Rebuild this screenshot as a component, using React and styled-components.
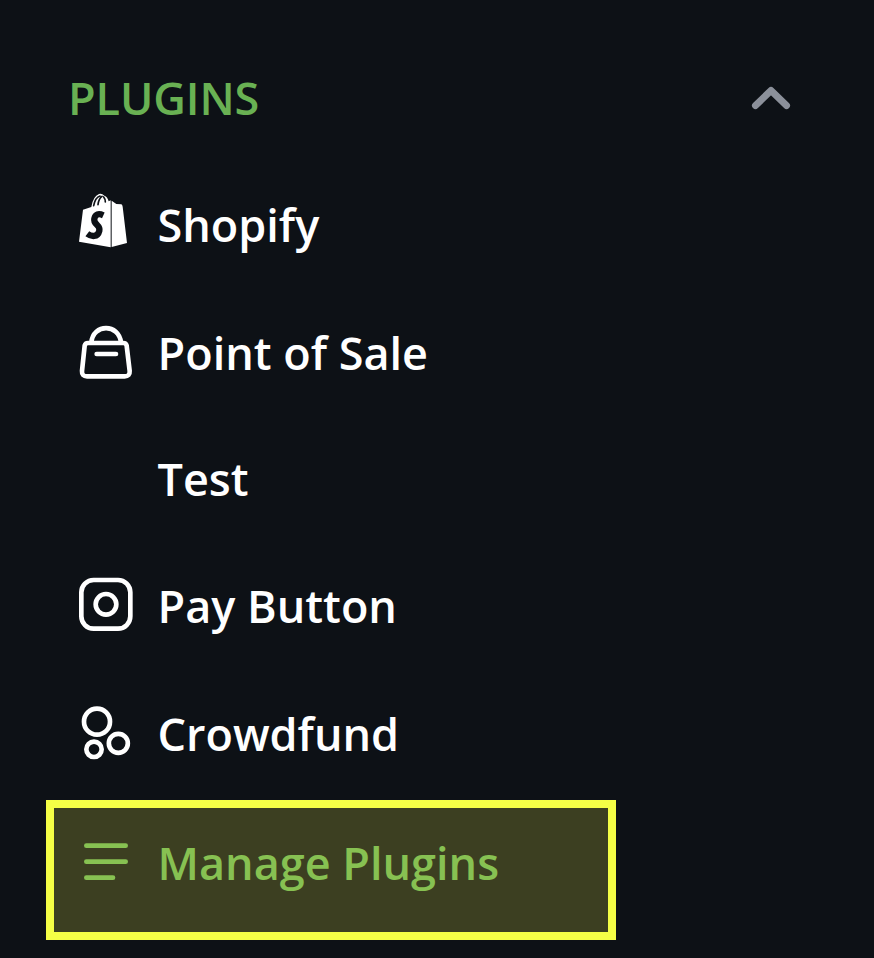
import React from "react";
import styled, { createGlobalStyle } from "styled-components";

const Global = createGlobalStyle`
  * { box-sizing: border-box; }
  body { margin: 0; background: #0d1116; overflow: hidden; }
`;

const Sidebar = styled.nav`
  width: 874px;
  height: 958px;
  padding-top: 36px;
  background: #0d1116;
  color: #fff;
  font: 600 45px/60px "Open Sans", sans-serif;
`;

const Header = styled.header`
  display: flex;
  align-items: center;
  justify-content: space-between;
  height: 124px;
  padding: 0 83px 0 68px;
`;

const Title = styled.h2`
  margin: 0;
  color: #69b153;
  font: inherit;
  letter-spacing: -0.1px;
`;

const Chevron = styled.svg`
  width: 40px;
  height: 24px;
`;

const Menu = styled.ul`
  display: flex;
  flex-direction: column;
  margin: 0;
  padding: 0;
  list-style: none;
`;

const Item = styled.li`
  display: flex;
  align-items: center;
  height: ${(p) => p.$height || 128}px;
  padding-left: 65px;
`;

const ActiveItem = styled(Item)`
  width: 570px;
  height: 140px;
  margin: 2px 0 0 46px;
  padding: 0 0 16px 11px;
  border: 8px solid #f5ff46;
  background: #3c3f21;
  color: #87c152;
`;

const Icon = styled.svg`
  flex: none;
  width: 80px;
  height: 80px;
  fill: none;
  stroke: currentColor;
  stroke-width: 14;
  stroke-linecap: round;
  stroke-linejoin: round;
`;

const IconSlot = styled.span`
  flex: none;
  width: 80px;
`;

const Label = styled.span`
  margin-left: 12.5px;
  padding-top: ${(p) => p.$drop || 0}px;
  white-space: nowrap;
`;

const ShopifyIcon = () => (
  <Icon viewBox="0 12 240 240">
    <path d="M54 89L79 81Q84 49 102 42Q111 40 118 47Q128 51 131 64L137 61V202L42 185Z" fill="currentColor" stroke="none" />
    <path d="M140 62L154 72L169 73Q172 74 173 80L186 189L140 201Z" fill="currentColor" stroke="none" />
    <path d="M86 77Q91 52 105 48M99 74Q101 56 111 49M116 51Q121 57 121 66" stroke="#0d1116" strokeWidth="5" />
    <path d="M115 106Q93 96 88 116C84 134 107 135 103 152C98 173 79 170 67 161" stroke="#0d1116" strokeWidth="19" strokeLinecap="butt" />
  </Icon>
);

const BagIcon = () => (
  <Icon viewBox="0 -9 240 240">
    <path d="M69 84H175Q183 84 185 92L194 168Q195 184 179 184H66Q50 184 51 168L59 92Q61 84 69 84Z" />
    <path d="M79 83C84 25 162 25 168 83M95 117H153" />
  </Icon>
);

const PayIcon = () => (
  <Icon viewBox="0 3 240 240">
    <rect x="49" y="45" width="147" height="146" rx="37" />
    <circle cx="123" cy="118" r="31" />
  </Icon>
);

const CrowdIcon = () => (
  <Icon viewBox="0 -3 240 240">
    <circle cx="96" cy="80" r="39" />
    <circle cx="160" cy="145" r="28.5" />
    <circle cx="87" cy="163" r="23" />
  </Icon>
);

const ManageIcon = () => (
  <Icon viewBox="0 0 240 240">
    <path d="M64 71H182M64 119H182M64 167H144" />
  </Icon>
);

const items = [
  { label: "Shopify", Glyph: ShopifyIcon, drop: 1 },
  { label: "Point of Sale", Glyph: BagIcon, drop: 2 },
  { label: "Test", height: 126 },
  { label: "Pay Button", Glyph: PayIcon },
  { label: "Crowdfund", Glyph: CrowdIcon },
];

export default function App() {
  return (
    <>
      <Global />
      <Sidebar>
        <Header>
          <Title>PLUGINS</Title>
          <Chevron viewBox="0 0 40 24" fill="none" stroke="#8b909a" strokeWidth="7" strokeLinecap="round" strokeLinejoin="round">
            <path d="M4.5 19.5L20 4.5L35.5 19.5" />
          </Chevron>
        </Header>
        <Menu>
          {items.map(({ label, Glyph, height, drop }) => (
            <Item key={label} $height={height}>
              {Glyph ? <Glyph /> : <IconSlot />}
              <Label $drop={drop}>{label}</Label>
            </Item>
          ))}
          <ActiveItem>
            <ManageIcon />
            <Label $drop={2}>Manage Plugins</Label>
          </ActiveItem>
        </Menu>
      </Sidebar>
    </>
  );
}
